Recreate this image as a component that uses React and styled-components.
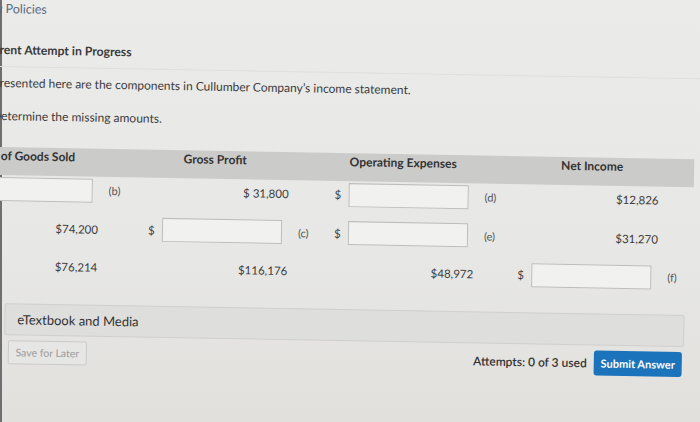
import React from "react";
import styled, { createGlobalStyle } from "styled-components";

const GlobalStyle = createGlobalStyle`
  html, body { margin: 0; padding: 0; }
  body {
    width: 700px;
    height: 422px;
    overflow: hidden;
    background: linear-gradient(180deg, #ebebe9 0%, #e7e7e5 60%, #e1e0dd 100%);
    box-shadow: inset 2px 0 0 #6f6f6f;
    font-family: Lato, "Open Sans", "Liberation Sans", sans-serif;
    color: #3a3a3a;
  }
`;

const Page = styled.div`
  width: 760px;
  margin-left: -50px;
  transform: rotate(1deg);
  transform-origin: 50px 0;
  display: flex;
  flex-direction: column;
`;

const PolicyLink = styled.div`
  height: 18px;
  line-height: 18px;
  padding-left: 25px;
  font-size: 12.5px;
  color: #5a6a82;
`;

const Heading = styled.div`
  margin-top: 23px;
  padding: 0 0 7px 31px;
  line-height: 18px;
  font-size: 12.2px;
  font-weight: 700;
  color: #3a3a3a;
  border-bottom: 1px solid #dfdfdd;
`;

const Question = styled.p`
  margin: ${(p) => p.$top}px 0 0;
  padding-left: 44px;
  line-height: 18px;
  font-size: 12px;
  color: #3c3c3c;
`;

const HeaderBand = styled.div`
  margin-top: 22px;
  height: 28px;
  width: 747px;
  box-sizing: border-box;
  padding: 2px 0 0 12px;
  background: #cbcbc9;
  display: grid;
  grid-template-columns: 190px 186px 184px 186px;
`;

const HeadCell = styled.div`
  width: 140px;
  margin-left: ${(p) => p.$shift || 0}px;
  text-align: center;
  line-height: 14px;
  font-size: 12px;
  font-weight: 700;
  color: #333;
  white-space: nowrap;
`;

const Rows = styled.div`
  margin-top: 2px;
  padding-left: 12px;
  display: flex;
  flex-direction: column;
  gap: 14.5px;
`;

const Row = styled.div`
  display: grid;
  grid-template-columns: 190px 186px 184px 186px;
  height: 24px;
`;

const Group = styled.div`
  display: flex;
  align-items: center;
  height: 24px;
`;

const Dollar = styled.span`
  width: 14px;
  flex: none;
  font-size: 11.5px;
  color: #444;
`;

const Mid = styled.div`
  width: 126px;
  flex: none;
  display: flex;
  justify-content: flex-end;
`;

const Box = styled.div`
  width: 120px;
  height: 24px;
  box-sizing: border-box;
  margin-right: 6px;
  background: #f1f1ef;
  border: 1px solid #bdbdbb;
`;

const Value = styled.span`
  font-size: 11.5px;
  color: #3d3d3d;
  white-space: nowrap;
`;

const Tag = styled.span`
  margin-left: 10px;
  font-size: 11px;
  color: #555;
`;

const Media = styled.div`
  margin: 25px 0 0 60px;
  width: 680px;
  height: 32px;
  box-sizing: border-box;
  padding-left: 12px;
  display: flex;
  align-items: center;
  background: #dededc;
  border: 1px solid #cfcfcd;
  border-radius: 2px;
  font-size: 13px;
  color: #333;
`;

const Actions = styled.div`
  margin: 5px 0 0 64px;
  width: 674px;
  display: flex;
  align-items: center;
`;

const SaveButton = styled.div`
  width: 79px;
  height: 24px;
  box-sizing: border-box;
  display: flex;
  align-items: center;
  justify-content: center;
  border: 1px solid #cacac8;
  border-radius: 2px;
  background: #e6e6e4;
  font-size: 10.5px;
  color: #9b9b9b;
`;

const Attempts = styled.span`
  margin-left: auto;
  margin-right: 7px;
  font-size: 12px;
  font-weight: 600;
  color: #333;
`;

const SubmitButton = styled.div`
  width: 88px;
  height: 25px;
  display: flex;
  align-items: center;
  justify-content: center;
  border-radius: 3px;
  background: #1a73bb;
  font-size: 11px;
  font-weight: 700;
  color: #fff;
`;

const Cell = ({ dollar, box, value, tag }) => (
  <Group>
    <Dollar>{dollar ? "$" : ""}</Dollar>
    <Mid>{box ? <Box /> : <Value>{value}</Value>}</Mid>
    {tag && <Tag>{tag}</Tag>}
  </Group>
);

const headers = [
  { label: "Cost of Goods Sold", shift: -5 },
  { label: "Gross Profit", shift: -4 },
  { label: "Operating Expenses", shift: -2 },
  { label: "Net Income", shift: 3 },
];

const rows = [
  [
    { dollar: true, box: true, tag: "(b)" },
    { value: "$ 31,800" },
    { dollar: true, box: true, tag: "(d)" },
    { value: "$12,826" },
  ],
  [
    { value: "$74,200" },
    { dollar: true, box: true, tag: "(c)" },
    { dollar: true, box: true, tag: "(e)" },
    { value: "$31,270" },
  ],
  [
    { value: "$76,214" },
    { value: "$116,176" },
    { value: "$48,972" },
    { dollar: true, box: true, tag: "(f)" },
  ],
];

export default function App() {
  return (
    <>
      <GlobalStyle />
      <Page>
        <PolicyLink>View Policies</PolicyLink>
        <Heading>Current Attempt in Progress</Heading>
        <Question $top={6.5}>
          Presented here are the components in Cullumber Company’s income statement.
        </Question>
        <Question $top={15}>Determine the missing amounts.</Question>
        <HeaderBand>
          {headers.map((h) => (
            <HeadCell key={h.label} $shift={h.shift}>
              {h.label}
            </HeadCell>
          ))}
        </HeaderBand>
        <Rows>
          {rows.map((r, i) => (
            <Row key={i}>
              {r.map((c, j) => (
                <Cell key={j} {...c} />
              ))}
            </Row>
          ))}
        </Rows>
        <Media>eTextbook and Media</Media>
        <Actions>
          <SaveButton>Save for Later</SaveButton>
          <Attempts>Attempts: 0 of 3 used</Attempts>
          <SubmitButton>Submit Answer</SubmitButton>
        </Actions>
      </Page>
    </>
  );
}
